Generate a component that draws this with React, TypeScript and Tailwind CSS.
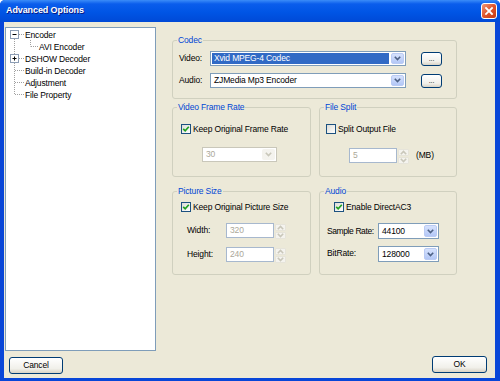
import React from 'react';

function Chevron({ color, up = false }: { color: string; up?: boolean }) {
  return (
    <svg width="7" height="5" viewBox="0 0 7 5">
      <path
        d={up ? 'M0.8 4.2 L3.5 1.4 L6.2 4.2' : 'M0.8 0.8 L3.5 3.6 L6.2 0.8'}
        fill="none"
        stroke={color}
        strokeWidth="1.6"
      />
    </svg>
  );
}

interface ComboProps {
  value: string;
  className: string;
  selected?: boolean;
  disabled?: boolean;
}

function Combo({ value, className, selected = false, disabled = false }: ComboProps) {
  return (
    <div
      className={`flex shrink-0 border bg-white ${disabled ? 'border-[#C9C7BA]' : 'border-[#7F9DB9]'} ${className}`}
    >
      <div className="flex-1 p-[1px] flex">
        <span
          className={`flex-1 flex items-center px-[2px] leading-none ${
            selected ? 'bg-[#316AC5] text-white' : disabled ? 'text-[#ACA899]' : 'text-black'
          }`}
        >
          {value}
        </span>
      </div>
      <div
        className={`w-[13px] m-[1px] rounded-[2px] flex items-center justify-center ${
          disabled
            ? 'bg-[#F4F3EE]'
            : 'bg-[linear-gradient(#D6E2FD,#B3C7F6)] border border-[#BACBF4]'
        }`}
      >
        <Chevron color={disabled ? '#C9C7BA' : '#4D6185'} />
      </div>
    </div>
  );
}

function Spin({ value, className }: { value: string; className: string }) {
  return (
    <div className={`flex shrink-0 ${className}`}>
      <div className="flex-1 border border-[#A7B8CE] bg-white text-[#ACA899] px-[3px] flex items-center leading-none">
        {value}
      </div>
      <div className="w-[12px] flex flex-col gap-[1px] py-[1px] pl-[1px]">
        <div className="flex-1 bg-[#F4F3EE] border border-[#E6E4DA] rounded-[1px] flex items-center justify-center">
          <Chevron color="#C9C7BA" up />
        </div>
        <div className="flex-1 bg-[#F4F3EE] border border-[#E6E4DA] rounded-[1px] flex items-center justify-center">
          <Chevron color="#C9C7BA" />
        </div>
      </div>
    </div>
  );
}

function Check({ checked, label, className = '' }: { checked: boolean; label: string; className?: string }) {
  return (
    <div className={`flex items-center gap-[2px] h-[10px] ${className}`}>
      <div className="w-[10px] h-[10px] border border-[#1C5180] bg-[linear-gradient(135deg,#DCDCD7,#FFFFFF)] flex items-center justify-center">
        {checked && (
          <svg width="8" height="8" viewBox="0 0 8 8">
            <path d="M1.2 3.8 L3.2 5.8 L6.8 1.8" fill="none" stroke="#21A121" strokeWidth="1.7" />
          </svg>
        )}
      </div>
      <span className="leading-none">{label}</span>
    </div>
  );
}

function XPButton({ children, className }: { children: React.ReactNode; className: string }) {
  return (
    <button
      className={`shrink-0 border border-[#003C74] rounded-[3px] bg-[linear-gradient(#FFFFFF,#F1F0EA_70%,#D8D3C6)] flex items-center justify-center leading-none text-black ${className}`}
    >
      {children}
    </button>
  );
}

function Group({ title, className, children }: { title: string; className: string; children: React.ReactNode }) {
  return (
    <div className={`relative border border-[#D0D0BF] rounded-[3px] shrink-0 ${className}`}>
      <span className="absolute -top-[6px] left-[4px] px-[1px] bg-[#ECE9D8] text-[#0046D5] leading-[10px]">
        {title}
      </span>
      {children}
    </div>
  );
}

function TreeLines() {
  const dot = { stroke: '#A0A0A0', strokeWidth: 1, strokeDasharray: '1 1' };
  return (
    <svg className="absolute left-0 top-0" width="40" height="76" viewBox="0 0 40 76">
      <line x1="8.5" y1="11" x2="8.5" y2="26" {...dot} />
      <line x1="8.5" y1="35" x2="8.5" y2="67" {...dot} />
      <line x1="13" y1="6.5" x2="18" y2="6.5" {...dot} />
      <line x1="13" y1="30.5" x2="18" y2="30.5" {...dot} />
      <line x1="9" y1="42.5" x2="18" y2="42.5" {...dot} />
      <line x1="9" y1="54.5" x2="18" y2="54.5" {...dot} />
      <line x1="9" y1="66.5" x2="18" y2="66.5" {...dot} />
      <line x1="24.5" y1="12" x2="24.5" y2="18.5" {...dot} />
      <line x1="25" y1="18.5" x2="32" y2="18.5" {...dot} />
      <rect x="4.5" y="2.5" width="8" height="8" fill="#fff" stroke="#8C9DB5" />
      <line x1="6.5" y1="6.5" x2="10.5" y2="6.5" stroke="#000" />
      <rect x="4.5" y="26.5" width="8" height="8" fill="#fff" stroke="#8C9DB5" />
      <line x1="6.5" y1="30.5" x2="10.5" y2="30.5" stroke="#000" />
      <line x1="8.5" y1="28.5" x2="8.5" y2="32.5" stroke="#000" />
    </svg>
  );
}

const tree = [
  { label: 'Encoder', indent: 'pl-[19px]' },
  { label: 'AVI Encoder', indent: 'pl-[33px]' },
  { label: 'DSHOW Decoder', indent: 'pl-[19px]' },
  { label: 'Build-in Decoder', indent: 'pl-[19px]' },
  { label: 'Adjustment', indent: 'pl-[19px]' },
  { label: 'File Property', indent: 'pl-[19px]' },
];

export default function App() {
  return (
    <div className="w-[500px] h-[381px] flex flex-col bg-[#0846D8] rounded-t-[5px] overflow-hidden font-['Liberation_Sans',Arial,sans-serif] text-[8.5px] tracking-[-0.15px] whitespace-nowrap text-black">
      {/* title bar */}
      <div className="h-[22px] shrink-0 flex items-center justify-between pl-[6px] pr-[3px] bg-[linear-gradient(#3B8CF8,#0A5DEC_18%,#0055E5_55%,#0049D6)]">
        <span className="text-white font-bold text-[9px] tracking-[-0.1px] [text-shadow:1px_1px_#0A1883]">
          Advanced Options
        </span>
        <div className="w-[16px] h-[16px] rounded-[3px] border border-white bg-[linear-gradient(135deg,#F09676,#E0552C_50%,#C33A14)] flex items-center justify-center">
          <svg width="10" height="10" viewBox="0 0 10 10">
            <path d="M2 2 L8 8 M8 2 L2 8" stroke="#fff" strokeWidth="1.8" strokeLinecap="square" />
          </svg>
        </div>
      </div>

      {/* client area */}
      <div className="flex-1 ml-[4px] mr-[5px] mb-[3px] bg-[#ECE9D8] flex flex-col">
        <div className="flex pt-[5px] pl-[1px]">
          {/* tree */}
          <div className="w-[151px] h-[324px] shrink-0 border border-[#7F9DB9] bg-white">
            <div className="relative pt-[1px]">
              <TreeLines />
              {tree.map((t) => (
                <div key={t.label} className={`h-[12px] leading-[12px] ${t.indent}`}>
                  {t.label}
                </div>
              ))}
            </div>
          </div>

          {/* options */}
          <div className="ml-[16px] mt-[13px] flex flex-col">
            <Group title="Codec" className="w-[285px] h-[59px] pt-[10px] pl-[6px]">
              <div className="flex flex-col gap-[7px]">
                <div className="flex items-center">
                  <span className="w-[31px]">Video:</span>
                  <Combo value="Xvid MPEG-4 Codec" selected className="w-[196px] h-[15px]" />
                  <XPButton className="ml-[15px] w-[21px] h-[14px] text-[7px] text-[#333]">...</XPButton>
                </div>
                <div className="flex items-center">
                  <span className="w-[31px]">Audio:</span>
                  <Combo value="ZJMedia Mp3 Encoder" className="w-[196px] h-[15px]" />
                  <XPButton className="ml-[15px] w-[21px] h-[14px] text-[7px] text-[#333]">...</XPButton>
                </div>
              </div>
            </Group>

            <div className="flex gap-[8px] mt-[8px]">
              <Group title="Video Frame Rate" className="w-[139px] h-[70px] pt-[16px] pl-[8px]">
                <Check checked label="Keep Original Frame Rate" />
                <Combo value="30" disabled className="ml-[21px] mt-[13px] w-[75px] h-[15px]" />
              </Group>
              <Group title="File Split" className="w-[138px] h-[70px] pt-[16px] pl-[6px]">
                <Check checked={false} label="Split Output File" />
                <div className="flex items-center ml-[23px] mt-[14px]">
                  <Spin value="5" className="w-[60px] h-[15px]" />
                  <span className="ml-[7px]">(MB)</span>
                </div>
              </Group>
            </div>

            <div className="flex gap-[8px] mt-[14px]">
              <Group title="Picture Size" className="w-[139px] h-[84px] pt-[10px] pl-[8px]">
                <Check checked label="Keep Original Picture Size" />
                <div className="flex flex-col gap-[9px] mt-[11px] ml-[6px]">
                  <div className="flex items-center">
                    <span className="w-[39px]">Width:</span>
                    <Spin value="320" className="w-[60px] h-[15px]" />
                  </div>
                  <div className="flex items-center">
                    <span className="w-[39px]">Height:</span>
                    <Spin value="240" className="w-[60px] h-[15px]" />
                  </div>
                </div>
              </Group>
              <Group title="Audio" className="w-[138px] h-[84px] pt-[10px] pl-[7px]">
                <Check checked label="Enable DirectAC3" className="ml-[7px]" />
                <div className="flex flex-col gap-[7px] mt-[11px]">
                  <div className="flex items-center">
                    <span className="w-[51px] tracking-[-0.4px]">Sample Rate:</span>
                    <Combo value="44100" className="w-[61px] h-[16px]" />
                  </div>
                  <div className="flex items-start">
                    <span className="w-[51px] mt-[1px]">BitRate:</span>
                    <Combo value="128000" className="w-[61px] h-[16px]" />
                  </div>
                </div>
              </Group>
            </div>
          </div>
        </div>

        {/* buttons */}
        <div className="flex justify-between items-start mt-[5px]">
          <XPButton className="ml-[5px] mt-[1px] w-[54px] h-[17px]">Cancel</XPButton>
          <XPButton className="mr-[8px] w-[55px] h-[17px]">OK</XPButton>
        </div>
      </div>
    </div>
  );
}
